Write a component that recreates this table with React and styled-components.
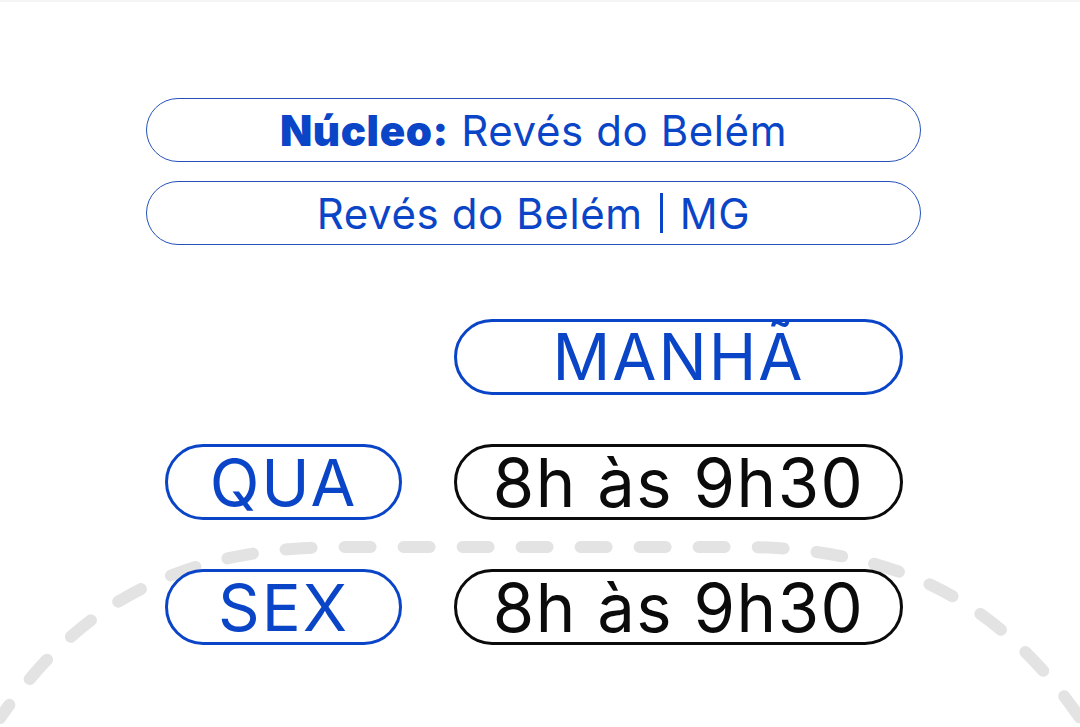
import React from 'react'
import styled, { createGlobalStyle } from 'styled-components'

const GlobalStyle = createGlobalStyle`
  html, body {
    margin: 0;
    padding: 0;
    background: #fff;
  }
  body {
    font-family: Inter, 'Noto Sans', sans-serif;
  }
`

const Page = styled.div`
  position: relative;
  width: 1080px;
  height: 727px;
  overflow: hidden;
  background: #fff;
  border-top: 2px solid #f4f4f4;
  box-sizing: border-box;
`

const Arc = styled.svg`
  position: absolute;
  left: 0;
  top: 0;
  width: 1080px;
  height: 727px;
  z-index: 0;
`

const Content = styled.div`
  position: relative;
  z-index: 1;
  display: flex;
  flex-direction: column;
  padding: 96px 0 0 146px;
`

const InfoList = styled.div`
  display: flex;
  flex-direction: column;
  gap: 19px;
  width: 775px;
`

const InfoPill = styled.div`
  display: flex;
  align-items: center;
  justify-content: center;
  gap: 8px;
  height: 64px;
  box-sizing: border-box;
  border: 1.5px solid #2552ba;
  border-radius: 32px;
  color: #0a45c8;
  font-size: 42px;
  letter-spacing: 0.6px;
`

const Strong = styled.strong`
  font-weight: 900;
`

const Divider = styled.span`
  display: inline-block;
  width: 3px;
  height: 40px;
  margin: 0 9px;
  background: #0a45c8;
`

const Schedule = styled.div`
  display: grid;
  grid-template-columns: 237px 449px;
  grid-auto-rows: 76px;
  column-gap: 52px;
  row-gap: 49px;
  margin: 74px 0 0 19px;
`

const Pill = styled.div`
  grid-column: ${(p) => p.$col};
  display: flex;
  align-items: center;
  justify-content: center;
  box-sizing: border-box;
  border: 3px solid ${(p) => (p.$dark ? '#0b0b0b' : '#0a45c8')};
  border-radius: 40px;
  color: ${(p) => (p.$dark ? '#0b0b0b' : '#0a45c8')};
  font-size: ${(p) => p.$size || 65}px;
  letter-spacing: ${(p) => p.$spacing ?? 2}px;
  line-height: 1;
`

const days = ['QUA', 'SEX']

export default function App() {
  return (
    <>
      <GlobalStyle />
      <Page>
        <Arc viewBox="0 0 1080 727">
          <path
            d="M 0 716 C 80 600, 180 548, 330 545 L 750 545 C 900 548, 1000 600, 1080 716"
            fill="none"
            stroke="#e3e3e3"
            strokeWidth="12"
            strokeLinecap="round"
            strokeDasharray="26 33"
            strokeDashoffset="10"
          />
        </Arc>
        <Content>
          <InfoList>
            <InfoPill>
              <span>
                <Strong>Núcleo:</Strong> Revés do Belém
              </span>
            </InfoPill>
            <InfoPill>
              <span>Revés do Belém</span>
              <Divider />
              <span>MG</span>
            </InfoPill>
          </InfoList>
          <Schedule>
            <Pill $col={2} $size={64} $spacing={2}>
              MANHÃ
            </Pill>
            {days.map((day) => (
              <React.Fragment key={day}>
                <Pill $col={1}>{day}</Pill>
                <Pill $col={2} $dark $size={67} $spacing={1.5}>
                  8h às 9h30
                </Pill>
              </React.Fragment>
            ))}
          </Schedule>
        </Content>
      </Page>
    </>
  )
}
